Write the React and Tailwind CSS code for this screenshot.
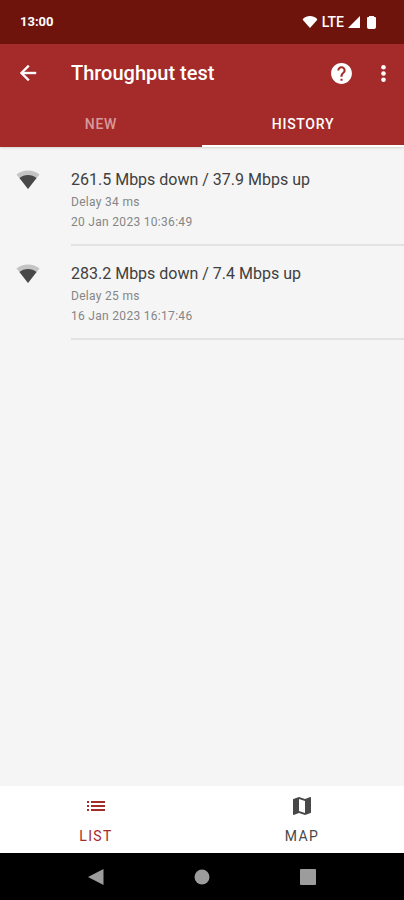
const results = [
  { speed: "261.5 Mbps down / 37.9 Mbps up", delay: "Delay 34 ms", date: "20 Jan 2023 10:36:49" },
  { speed: "283.2 Mbps down / 7.4 Mbps up", delay: "Delay 25 ms", date: "16 Jan 2023 16:17:46" },
];

function StatusBar() {
  return (
    <div className="flex h-11 items-center justify-between bg-[#6f130d] pr-6 pl-5 text-white">
      <span className="text-[13px] font-bold">13:00</span>
      <div className="flex items-center gap-1">
        <svg className="h-3 w-4" viewBox="0 0 16 12" fill="currentColor">
          <path d="M8 12 .9 4.1C.6 3.7.7 3.100 1.100 2.700 3 1 5.400 0 8 0s5 1 6.900 2.700c.4.4.5 1 .2 1.400z" />
        </svg>
        <span className="text-sm font-medium">LTE</span>
        <svg className="h-3 w-3" viewBox="0 0 12 12" fill="currentColor">
          <path d="M12 0v12H0z" />
        </svg>
        <svg className="h-[13px] w-4" viewBox="0 0 16 13" fill="currentColor">
          <path d="M5 0h5v1h1q1 0 1 1v9q0 2-2 2H5q-2 0-2-2V2q0-1 1-1h1z" />
        </svg>
      </div>
    </div>
  );
}

function AppBar() {
  return (
    <div className="flex h-[58px] items-center pl-4 text-white">
      <button aria-label="Back" className="w-[55px]">
        <svg className="size-6" viewBox="0 0 24 24" fill="currentColor" stroke="currentColor" strokeWidth="0.4">
          <path d="M20 11H7.830l5.590-5.590L12 4l-8 8 8 8 1.410-1.410L7.830 13H20z" />
        </svg>
      </button>
      <h1 className="flex-1 text-xl font-medium">Throughput test</h1>
      <button aria-label="Help" className="flex w-[42px] justify-center">
        <svg className="size-[25px]" viewBox="0 0 24 24" fill="currentColor">
          <path d="M12 2C6.480 2 2 6.480 2 12s4.480 10 10 10 10-4.480 10-10S17.520 2 12 2zm1 17h-2v-2h2zm2.070-7.750-.9.920C13.450 12.900 13 13.500 13 15h-2v-.5c0-1.100.45-2.100 1.170-2.830l1.240-1.260c.37-.36.59-.86.59-1.410 0-1.100-.9-2-2-2s-2 .9-2 2H8c0-2.210 1.790-4 4-4s4 1.790 4 4c0 .88-.36 1.680-.93 2.250z" />
        </svg>
      </button>
      <button aria-label="More options" className="flex w-[42px] justify-center">
        <svg className="size-[25px]" viewBox="0 0 24 24" fill="currentColor">
          <circle cx="12" cy="6" r="2.200" />
          <circle cx="12" cy="12" r="2.200" />
          <circle cx="12" cy="18" r="2.200" />
        </svg>
      </button>
    </div>
  );
}

function Tabs() {
  return (
    <div role="tablist" className="grid h-[45px] grid-cols-2 text-sm font-medium tracking-wider">
      <button role="tab" aria-selected="false" className="border-b-2 border-transparent text-[#d79a9a]">
        NEW
      </button>
      <button role="tab" aria-selected="true" className="border-b-2 border-white text-white">
        HISTORY
      </button>
    </div>
  );
}

function ResultRow({ speed, delay, date }) {
  return (
    <li className="flex h-[94px] pl-4">
      <div className="w-[55px] pt-4">
        <svg className="size-6" viewBox="0 0 24 24">
          <path d="M12 21 .5 6.500Q5.500 2.500 12 2.500t11.500 4z" fill="#c4c4c4" />
          <path d="M12 21 3.500 10Q7 7 12 7t8.500 3z" fill="#484848" />
        </svg>
      </div>
      <div className="flex-1 border-b-2 border-[#e2e2e2] pt-4">
        <p className="text-base leading-6 text-[#404040]">{speed}</p>
        <p className="text-xs leading-5 tracking-wide text-[#858585]">{delay}</p>
        <p className="text-xs leading-5 tracking-wide text-[#858585]">{date}</p>
      </div>
    </li>
  );
}

export default function App() {
  return (
    <div className="flex min-h-screen flex-col bg-[#f5f5f5] font-[Roboto,sans-serif]">
      <StatusBar />
      <header className="bg-[#a52a2a] shadow-sm">
        <AppBar />
        <Tabs />
      </header>
      <main className="flex-1 pt-[5px]">
        <ul>
          {results.map((r) => (
            <ResultRow key={r.date} {...r} />
          ))}
        </ul>
      </main>
      <nav className="grid h-[67px] grid-cols-[16fr_17fr] gap-2 bg-white text-sm tracking-widest">
        <button className="flex flex-col items-center gap-2 pt-2 text-[#a52a2a]">
          <svg className="size-6" viewBox="0 0 24 24" fill="currentColor">
            <path d="M3 7h2v2H3zM7 7h14v2H7zM3 11h2v2H3zM7 11h14v2H7zM3 15h2v2H3zM7 15h14v2H7z" />
          </svg>
          <span>LIST</span>
        </button>
        <button className="flex flex-col items-center gap-2 pt-2 text-[#484848]">
          <svg className="size-6" viewBox="0 0 24 24" fill="currentColor">
            <path d="m20.500 3-.16.030L15 5.100 9 3 3.360 4.900c-.21.070-.36.250-.36.480V20.500c0 .28.220.5.5.5l.16-.03L9 18.900l6 2.100 5.640-1.900c.21-.07.36-.25.36-.48V3.500c0-.28-.22-.5-.5-.5zM15 19l-6-2.110V5l6 2.110z" />
          </svg>
          <span>MAP</span>
        </button>
      </nav>
      <div className="grid h-[47px] grid-cols-[106px_106px_106px] justify-center bg-black text-[#9c9c9c]">
        <button aria-label="System back" className="flex items-center justify-center">
          <svg className="size-4" viewBox="0 0 16 16" fill="currentColor">
            <path d="M15.500 0v16L0 8z" />
          </svg>
        </button>
        <button aria-label="Home" className="flex items-center justify-center">
          <svg className="size-4" viewBox="0 0 16 16" fill="currentColor">
            <circle cx="8" cy="8" r="7.500" />
          </svg>
        </button>
        <button aria-label="Recent apps" className="flex items-center justify-center">
          <svg className="size-4" viewBox="0 0 16 16" fill="currentColor">
            <rect width="16" height="16" rx="1" />
          </svg>
        </button>
      </div>
    </div>
  );
}
